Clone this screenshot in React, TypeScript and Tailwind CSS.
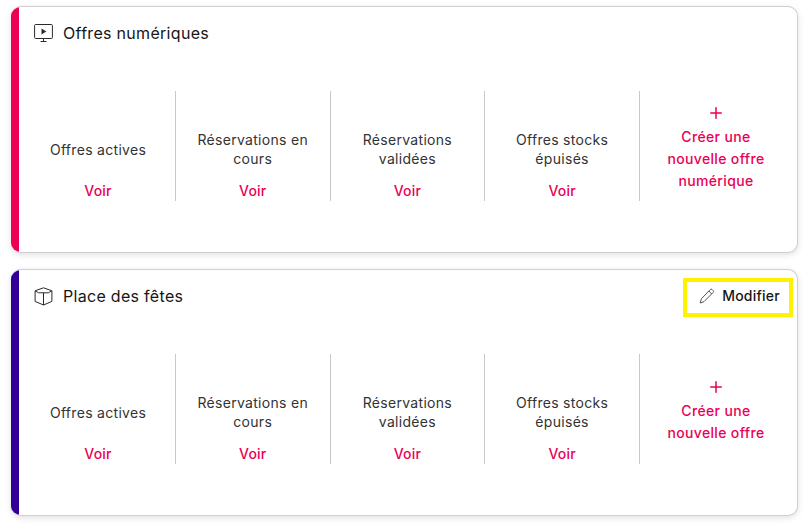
import { Plus } from 'lucide-react';

type Venue = {
  title: string;
  accent: string;
  icon: 'digital' | 'physical';
  createLines: string[];
  editable: boolean;
};

const stats: { label: string[] }[] = [
  { label: ['Offres actives'] },
  { label: ['Réservations en', 'cours'] },
  { label: ['Réservations', 'validées'] },
  { label: ['Offres stocks', 'épuisés'] },
];

const venues: Venue[] = [
  {
    title: 'Offres numériques',
    accent: 'bg-[#eb0055]',
    icon: 'digital',
    createLines: ['Créer une', 'nouvelle offre', 'numérique'],
    editable: false,
  },
  {
    title: 'Place des fêtes',
    accent: 'bg-[#320096]',
    icon: 'physical',
    createLines: ['Créer une', 'nouvelle offre'],
    editable: true,
  },
];

function ScreenIcon() {
  return (
    <svg width="19" height="19" viewBox="0 0 19 19" fill="none" stroke="#2a2a2a" strokeWidth="1">
      <path d="M1.6 .5h15.8a1 1 0 0 1 1 1v12a1 1 0 0 1-1 1H1.6a1 1 0 0 1-1-1v-12a1 1 0 0 1 1-1z" />
      <path d="M7.5 4.5v6l4.8-3z" fill="#2a2a2a" stroke="none" />
      <path d="M9.5 14.5v3.5M6.5 17.5h6" />
    </svg>
  );
}

function CubeIcon() {
  return (
    <svg width="19" height="19" viewBox="0 0 19 19" fill="none" stroke="#2a2a2a" strokeWidth="1" strokeLinejoin="round">
      <path d="M9.5 .8l8.4 3v10.6l-8.4 3.6-8.4-3.6V3.8z" />
      <path d="M1.3 4l3.4 1.8h9.6L17.7 4M9.5 5.8V18" />
    </svg>
  );
}

function PencilIcon() {
  return (
    <svg width="16" height="16" viewBox="0 0 16 16" fill="none" stroke="#555555" strokeWidth="1" strokeLinejoin="round">
      <path d="M11.2 1.6a1.4 1.4 0 0 1 2 0l.9.9a1.4 1.4 0 0 1 0 2L5 13.6 1.2 15l1.2-4.2z" />
      <path d="M9.8 3l3 3" />
    </svg>
  );
}

function VenueCard({ venue }: { venue: Venue }) {
  return (
    <div className="flex h-[247px] overflow-hidden rounded-[10px] border border-[#cfcfcf] border-l-0 bg-white shadow-[0_2px_6px_rgba(0,0,0,0.12)]">
      <div className={`w-2 shrink-0 ${venue.accent}`} />
      <div className="flex min-w-0 flex-1 flex-col">
        <div className="flex h-[52px] items-center justify-between pl-[15px] pr-[4px]">
          <div className="flex items-center gap-[10px]">
            {venue.icon === 'digital' ? <ScreenIcon /> : <CubeIcon />}
            <h2 className="text-[16px] leading-5 font-normal tracking-[0.3px] text-[#161616]">{venue.title}</h2>
          </div>
          {venue.editable && (
            <button className="mt-[2px] flex h-[39px] w-[110px] items-center justify-center gap-[7px] border-[4px] border-[#fff200] pb-[3px] pl-[3px] text-[14px] font-medium tracking-[0.2px] text-[#161616]">
              <PencilIcon />
              Modifier
            </button>
          )}
        </div>
        <div className="mt-[32px] flex h-[110px] pl-[2.2px]">
          {stats.map((stat) => (
            <div
              key={stat.label[0]}
              className="flex w-[154.7px] shrink-0 flex-col items-center justify-end border-r border-[#c8c8c8] text-center"
            >
              <div className="flex h-[38px] flex-col justify-center text-[14px] leading-[19px] tracking-[0.3px] text-[#333333]">
                {stat.label.map((line) => (
                  <span key={line}>{line}</span>
                ))}
              </div>
              <a className="mt-[13px] text-[14px] leading-[20px] font-medium tracking-[0.2px] text-[#eb0055]">Voir</a>
            </div>
          ))}
          <div className="flex flex-1 flex-col items-center justify-center pr-[5px] pt-[4px] text-center text-[#eb0055]">
            <Plus size={18} strokeWidth={2} />
            <div className="mt-[4px] text-[14px] leading-[22px] font-medium tracking-[0.35px]">
              {venue.createLines.map((line) => (
                <div key={line}>{line}</div>
              ))}
            </div>
          </div>
        </div>
      </div>
    </div>
  );
}

export default function App() {
  return (
    <div className="flex h-[525px] w-[809px] flex-col gap-[16px] overflow-hidden bg-white pl-[11px] pr-[11px] pt-[6px] font-['Inter',sans-serif]">
      {venues.map((venue) => (
        <VenueCard key={venue.title} venue={venue} />
      ))}
    </div>
  );
}
